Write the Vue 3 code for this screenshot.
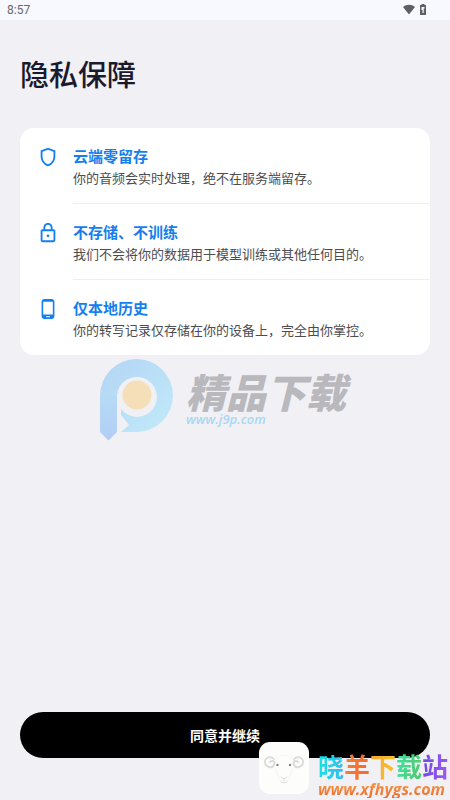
<template>
  <div class="page">
    <header class="status-bar">
      <span>8:57</span>
      <div class="status-icons">
        <svg width="12" height="11" viewBox="0 0 12 11"><path d="M6 10.500 0 3C3.500 0 8.500 0 12 3z" fill="#5f6064" /></svg>
        <svg width="8" height="11" viewBox="0 0 8 11">
          <path d="M2.500 0h3v1H7v10H1V1h1.500z" fill="#5f6064" />
          <path d="M2.500 3h3v1.500H4.700V9H3.500V6H2.500z" fill="#f8f9fe" />
        </svg>
      </div>
    </header>

    <main class="content">
      <h1>隐私保障</h1>
      <ul class="card">
        <li v-for="item in items" :key="item.icon" class="item">
          <svg class="item-icon" viewBox="0 0 24 24" aria-hidden="true">
            <path :d="icons[item.icon]" />
          </svg>
          <div class="item-text">
            <h2>{{ item.title }}</h2>
            <p>{{ item.desc }}</p>
          </div>
        </li>
      </ul>
      <button type="button" class="agree">同意并继续</button>
    </main>

    <div class="mark">
      <svg class="mark-logo" viewBox="0 0 74 82" aria-hidden="true">
        <defs>
          <linearGradient id="ring" x1="0" y1="0" x2="1" y2="1">
            <stop offset="0" stop-color="#b3d5f4" />
            <stop offset="1" stop-color="#c1eafa" />
          </linearGradient>
          <linearGradient id="stem" x1="0" y1="0" x2="0" y2="1">
            <stop offset="0" stop-color="#b6dbf6" />
            <stop offset="1" stop-color="#b2cdf5" />
          </linearGradient>
        </defs>
        <path d="M0 36A36.500 36.500 0 1 1 37 73H21l8-7-8-10V50A20 20 0 1 0 17 36z" fill="url(#ring)" />
        <path d="M0 36h17v37l-8.500 8.500L0 73z" fill="url(#stem)" />
        <circle cx="37" cy="36" r="14.500" fill="#f5dfb9" />
      </svg>
      <div class="mark-text">
        <span class="mark-name">精品下载</span>
        <span class="mark-url">www.j9p.com</span>
      </div>
    </div>

    <div class="site">
      <svg class="site-logo" viewBox="0 0 50 52" aria-hidden="true">
        <rect width="50" height="52" rx="11" fill="#fdfdfb" />
        <g fill="none" stroke="#dcdcd8" stroke-linecap="round">
          <path d="M15 17C10 13 5 17 6 21s7 6 9 2-2-5-4-3" stroke-width="2" />
          <path d="M35 17c5-4 10 0 9 4s-7 6-9 2 2-5 4-3" stroke-width="2" />
          <path d="M15 17c6-5 14-5 20 0M17 27c1 7 4 10 5 12M33 27c-1 7-4 10-5 12" stroke="#f5f5f2" />
          <path d="M22 35l3 2 3-2M25 37v2M22 40c2 1 4 1 6 0" stroke-width="1" />
        </g>
        <circle cx="18.500" cy="23" r="1.200" fill="#85857f" />
        <circle cx="31" cy="23" r="1.200" fill="#85857f" />
      </svg>
      <div class="site-text">
        <div class="site-name">
          <span v-for="ch in siteName" :key="ch.text" :class="ch.tone">{{ ch.text }}</span>
        </div>
        <div class="site-url">www.xfhygs.com</div>
      </div>
    </div>
  </div>
</template>

<script setup>
const items = [
  { icon: 'shield', title: '云端零留存', desc: '你的音频会实时处理，绝不在服务端留存。' },
  { icon: 'lock', title: '不存储、不训练', desc: '我们不会将你的数据用于模型训练或其他任何目的。' },
  { icon: 'phone', title: '仅本地历史', desc: '你的转写记录仅存储在你的设备上，完全由你掌控。' }
]

const icons = {
  shield: 'M12 2 4 5v6.090c0 5.050 3.410 9.760 8 10.910 4.590-1.150 8-5.860 8-10.910V5l-8-3zm6 9.090c0 4-2.550 7.700-6 8.830-3.450-1.130-6-4.820-6-8.830v-4.700l6-2.250 6 2.250v4.700z',
  lock: 'M18 8h-1V6c0-2.760-2.240-5-5-5S7 3.240 7 6v2H6c-1.100 0-2 .9-2 2v10c0 1.100.9 2 2 2h12c1.100 0 2-.9 2-2V10c0-1.100-.9-2-2-2zM9 6c0-1.660 1.340-3 3-3s3 1.340 3 3v2H9V6zm9 14H6V10h12v10zm-6-3.500a1.500 1.500 0 1 0 0-3 1.500 1.500 0 0 0 0 3z',
  phone: 'M16 1H8C6.340 1 5 2.340 5 4v16c0 1.660 1.340 3 3 3h8c1.660 0 3-1.340 3-3V4c0-1.660-1.340-3-3-3zm-2 20h-4v-1h4v1zm3.250-3H6.750V4h10.500v14z'
}

const siteName = [
  { text: '晓', tone: 'cyan' },
  { text: '羊', tone: 'orange' },
  { text: '下', tone: 'yellow' },
  { text: '载', tone: 'green' },
  { text: '站', tone: 'purple' }
]
</script>

<style>
body {
  margin: 0;
  background-color: #f1f0f5;
}
</style>

<style scoped>
.page {
  position: relative;
  display: flex;
  flex-direction: column;
  min-height: 100vh;
  background-color: #f1f0f5;
  font-family: Roboto, "Noto Sans CJK SC", sans-serif;
}

.status-bar {
  display: flex;
  align-items: center;
  justify-content: space-between;
  height: 20px;
  padding: 0 23px 0 7px;
  background-color: #f8f9fe;
  color: #66676b;
  font-size: 12px;
}

.status-icons {
  display: flex;
  align-items: center;
  gap: 4px;
  height: 18px;
  align-self: flex-start;
}

.content {
  flex: 1;
  display: flex;
  flex-direction: column;
  padding: 34px 20px 42px;
}

h1 {
  margin: 0 0 30px;
  color: #1b1a2c;
  font-size: 29px;
  font-weight: 500;
  line-height: 44px;
}

.card {
  margin: 0;
  padding: 0;
  list-style: none;
  background-color: #fff;
  border-radius: 14px;
}

.item {
  display: flex;
  gap: 14px;
  padding-left: 17px;
}

.item-icon {
  flex: none;
  width: 22px;
  height: 22px;
  margin-top: 18px;
  fill: #147fef;
}

.item-text {
  flex: 1;
  padding: 17px 0 14px;
}

.item:not(:last-child) .item-text {
  border-bottom: 1px solid #efeff2;
}

h2 {
  margin: 0;
  color: #147fef;
  font-size: 15px;
  font-weight: 700;
  line-height: 24px;
}

p {
  margin: 0;
  color: #4d4d4f;
  font-size: 13px;
  line-height: 20px;
}

.agree {
  height: 46px;
  margin-top: auto;
  border: none;
  border-radius: 23px;
  background-color: #000;
  color: #fff;
  font-family: inherit;
  font-size: 14px;
  font-weight: 700;
}

.mark {
  position: absolute;
  top: 359px;
  left: 100px;
  display: flex;
  gap: 12px;
  pointer-events: none;
}

.mark-logo {
  width: 74px;
  height: 82px;
}

.mark-text {
  display: flex;
  flex-direction: column;
  padding-top: 12px;
}

.mark-name {
  color: #b8b8bd;
  font-family: "Noto Sans CJK SC", sans-serif;
  font-size: 40px;
  font-style: italic;
  font-weight: 900;
  line-height: 40px;
}

.mark-url {
  color: #a8d8f3;
  font-family: "Open Sans", sans-serif;
  font-size: 13px;
  font-style: italic;
  font-weight: 600;
  line-height: 16px;
}

.site {
  position: absolute;
  right: 2px;
  bottom: 0;
  display: flex;
  align-items: flex-start;
  gap: 9px;
  height: 58px;
  pointer-events: none;
}

.site-logo {
  width: 50px;
  height: 52px;
}

.site-text {
  padding-top: 10px;
}

.site-name {
  display: flex;
  font-family: "Noto Sans CJK SC", sans-serif;
  font-size: 26px;
  font-weight: 700;
  line-height: 28px;
}

.site-name span,
.site-url {
  background-clip: text;
  color: transparent;
}

.cyan {
  background-image: linear-gradient(100deg, #16e5e5, #35b8ee);
}

.orange {
  background-image: linear-gradient(100deg, #f7813a, #f5662c);
}

.yellow {
  background-image: linear-gradient(100deg, #f6a52c, #f5c530);
}

.green {
  background-image: linear-gradient(100deg, #3fe0a0, #4fc968);
}

.purple {
  background-image: linear-gradient(100deg, #6a4be0, #a35af0);
}

.site-url {
  background-image: linear-gradient(180deg, #f5a04c, #ee6a2c);
  font-family: "Open Sans", sans-serif;
  font-size: 16px;
  font-style: italic;
  font-weight: 700;
  line-height: 18px;
}
</style>
